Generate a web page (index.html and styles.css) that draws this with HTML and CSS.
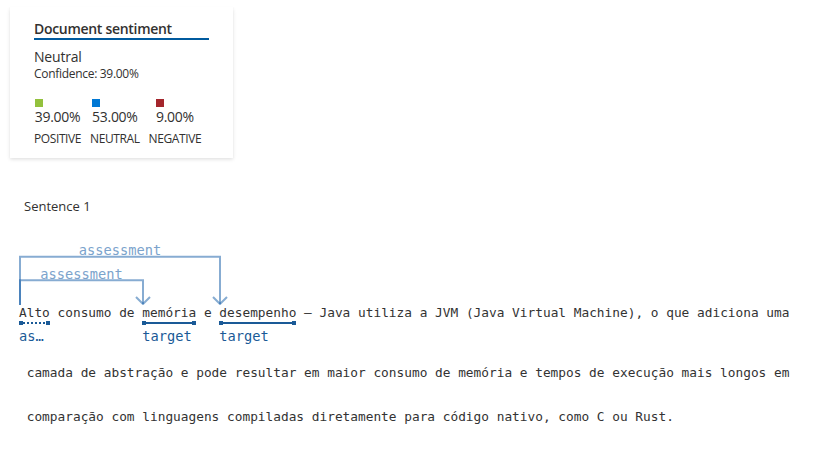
FILE: index.html
```html
<!DOCTYPE html>
<html>
<head>
<meta charset="utf-8">
<link rel="stylesheet" href="styles.css">
</head>
<body>
<div class="card">
  <div class="card-title">Document sentiment</div>
  <div class="overall">Neutral</div>
  <div class="confidence">Confidence: 39.00%</div>
  <div class="scores">
    <div class="score">
      <div class="score-top"><span class="swatch swatch-pos"></span><span class="pct">39.00%</span></div>
      <span class="score-label">POSITIVE</span>
    </div>
    <div class="score">
      <div class="score-top"><span class="swatch swatch-neu"></span><span class="pct">53.00%</span></div>
      <span class="score-label">NEUTRAL</span>
    </div>
    <div class="score">
      <div class="score-top"><span class="swatch swatch-neg"></span><span class="pct">9.00%</span></div>
      <span class="score-label">NEGATIVE</span>
    </div>
  </div>
</div>

<div class="sentence-title">Sentence 1</div>

<svg class="arcs" width="817" height="67" viewBox="0 0 817 67">
  <g fill="none" stroke="#0f5aa5" stroke-opacity="0.5" stroke-width="2">
    <path d="M20 67 V18.7 H220 V66"/>
    <path d="M20 67 V42.3 H143 V66"/>
    <polyline points="213,59 220,66 227,59"/>
    <polyline points="136,59 143,66 150,59"/>
  </g>
  <g class="arc-label" fill="#7ba3cc">
    <text x="120" y="17" text-anchor="middle">assessment</text>
    <text x="81.5" y="41" text-anchor="middle">assessment</text>
  </g>
</svg>

<div class="line line-first">
  <div class="tok">
    <span class="tok-text">Alto</span>
    <span class="uline uline-dotted"></span>
    <span class="tok-label">as…</span>
  </div>
  <div class="tok"><span class="tok-text"> consumo de </span></div>
  <div class="tok">
    <span class="tok-text">memória</span>
    <span class="uline"></span>
    <span class="tok-label">target</span>
  </div>
  <div class="tok"><span class="tok-text"> e </span></div>
  <div class="tok">
    <span class="tok-text">desempenho</span>
    <span class="uline"></span>
    <span class="tok-label">target</span>
  </div>
  <div class="tok"><span class="tok-text"> – Java utiliza a JVM (Java Virtual Machine), o que adiciona uma</span></div>
</div>
<div class="line line-second"><span class="tok-text"> camada de abstração e pode resultar em maior consumo de memória e tempos de execução mais longos em</span></div>
<div class="line"><span class="tok-text"> comparação com linguagens compiladas diretamente para código nativo, como C ou Rust.</span></div>
</body>
</html>
```
FILE: styles.css
```css
html, body {
  margin: 0;
  padding: 0;
  background: #ffffff;
}

body {
  font-family: "Open Sans", "Noto Sans", sans-serif;
  color: #323130;
}

.card {
  box-sizing: border-box;
  width: 223px;
  height: 151px;
  margin: 7px 0 0 10px;
  padding: 12px 24px 0 24px;
  background: #ffffff;
  box-shadow: 0 1.6px 3.6px rgba(0, 0, 0, 0.13), 0 0.3px 0.9px rgba(0, 0, 0, 0.11);
}

.card-title {
  font-size: 14px;
  font-weight: 600;
  line-height: 19px;
  letter-spacing: -0.3px;
  border-bottom: 2px solid #005a9e;
}

.overall {
  margin-top: 7px;
  font-size: 14px;
  line-height: 19px;
  letter-spacing: -0.2px;
}

.confidence {
  font-size: 12px;
  line-height: 16px;
  letter-spacing: -0.3px;
}

.scores {
  display: flex;
  gap: 9px;
  margin-top: 17px;
}

.score {
  display: flex;
  flex-direction: column;
  align-items: center;
}

.score-top {
  display: flex;
  flex-direction: column;
  align-items: flex-start;
}

.swatch {
  display: block;
  width: 8px;
  height: 8px;
}

.swatch-pos { background: #93c13d; }
.swatch-neu { background: #0078d4; }
.swatch-neg { background: #a4262c; }

.pct {
  font-size: 14px;
  line-height: 19px;
  letter-spacing: -0.3px;
}

.score-label {
  margin-top: 5px;
  font-size: 12px;
  line-height: 16px;
  letter-spacing: -0.4px;
}

.sentence-title {
  margin-top: 39px;
  padding-left: 24px;
  font-size: 13px;
  line-height: 18px;
}

.arcs {
  display: block;
  margin-top: 23px;
}

.arc-label {
  font-family: "DejaVu Sans Mono", "Liberation Mono", monospace;
  font-size: 13.7px;
}

.line {
  display: flex;
  align-items: flex-start;
  padding-left: 19px;
  height: 44px;
  font-family: "DejaVu Sans Mono", "Liberation Mono", monospace;
  font-size: 12.8px;
  line-height: 15px;
  color: #333333;
  white-space: pre;
}

.line-first {
  height: 39px;
}

.line-second {
  margin-top: 21px;
}

.tok {
  display: flex;
  flex-direction: column;
  align-items: stretch;
}

.tok-text {
  display: block;
}

.uline {
  display: flex;
  justify-content: space-between;
  align-items: center;
  height: 4px;
  margin-top: 1px;
  background: linear-gradient(#1a5a97, #1a5a97) center / 100% 2px no-repeat;
}

.uline::before,
.uline::after {
  content: "";
  flex: 0 0 4px;
  height: 4px;
  background: #1a5a97;
}

.uline-dotted {
  background: repeating-linear-gradient(90deg, #1a5a97 0 2px, transparent 2px 4px) center / 100% 2px no-repeat;
}

.tok-label {
  display: block;
  margin-top: 3px;
  height: 16px;
  font-size: 13.7px;
  line-height: 16px;
  color: #1a5a97;
}
```
